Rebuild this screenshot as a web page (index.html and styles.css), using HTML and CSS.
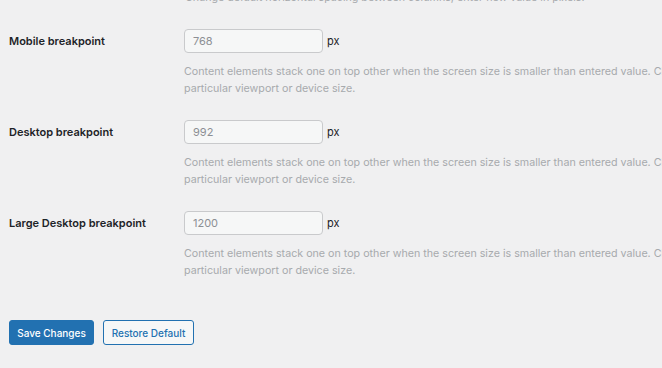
FILE: index.html
```html
<!DOCTYPE html>
<html lang="en">
<head>
<meta charset="utf-8">
<title>Breakpoints</title>
<link rel="stylesheet" href="styles.css">
</head>
<body>
<div class="page">
  <p class="desc top-desc">Change default horizontal spacing between columns, enter new value in pixels.</p>
  <div class="form">
    <div class="row">
      <div class="label">Mobile breakpoint</div>
      <div class="field">
        <div class="control"><input class="num" type="text" value="768"><span class="unit">px</span></div>
        <p class="desc">Content elements stack one on top other when the screen size is smaller than entered value. Change it to<br>particular viewport or device size.</p>
      </div>
    </div>
    <div class="row">
      <div class="label">Desktop breakpoint</div>
      <div class="field">
        <div class="control"><input class="num" type="text" value="992"><span class="unit">px</span></div>
        <p class="desc">Content elements stack one on top other when the screen size is smaller than entered value. Change it to<br>particular viewport or device size.</p>
      </div>
    </div>
    <div class="row">
      <div class="label">Large Desktop breakpoint</div>
      <div class="field">
        <div class="control"><input class="num" type="text" value="1200"><span class="unit">px</span></div>
        <p class="desc">Content elements stack one on top other when the screen size is smaller than entered value. Change it to<br>particular viewport or device size.</p>
      </div>
    </div>
  </div>
  <div class="actions">
    <button class="btn btn-primary" type="button">Save Changes</button>
    <button class="btn btn-secondary" type="button">Restore Default</button>
  </div>
</div>
</body>
</html>
```
FILE: styles.css
```css
html, body {
  margin: 0;
  padding: 0;
  background: #f0f0f1;
  overflow: hidden;
}
body {
  font-family: Inter, "Liberation Sans", Arial, sans-serif;
  font-size: 11px;
  color: #1d2327;
  width: 662px;
  height: 368px;
}
.page {
  padding: 0 0 0 9px;
  width: 900px;
}
.desc {
  margin: 0;
  color: #a7aaad;
  font-size: 10.7px;
  line-height: 17px;
  white-space: nowrap;
}
.top-desc {
  margin-left: 176px;
  margin-top: -11px;
}
.form {
  display: flex;
  flex-direction: column;
  gap: 23px;
  margin-top: 23px;
}
.row {
  display: grid;
  grid-template-columns: 175px auto;
}
.label {
  font-weight: 600;
  height: 24px;
  display: flex;
  align-items: center;
  white-space: nowrap;
}
.field {
  display: flex;
  flex-direction: column;
  gap: 10px;
}
.control {
  display: flex;
  align-items: center;
  gap: 4px;
}
.num {
  box-sizing: border-box;
  width: 139px;
  height: 24px;
  margin: 0;
  padding: 0 8px;
  border: 1px solid #c9cacc;
  border-radius: 4px;
  background: #f6f7f7;
  color: #8c8f94;
  font-family: inherit;
  font-size: 11px;
}
.unit {
  color: #1d2327;
  font-size: 11px;
}
.actions {
  display: flex;
  gap: 9px;
  margin-top: 41px;
}
.btn {
  box-sizing: border-box;
  height: 25px;
  padding: 0;
  border-radius: 3px;
  font-family: inherit;
  font-size: 10px;
  font-weight: 500;
  white-space: nowrap;
  cursor: pointer;
}
.btn-primary {
  background: #2271b1;
  border: 1px solid #2271b1;
  color: #fff;
  width: 85px;
}
.btn-secondary {
  background: #f6f7f7;
  border: 1px solid #2271b1;
  color: #2271b1;
  width: 91px;
}
```
